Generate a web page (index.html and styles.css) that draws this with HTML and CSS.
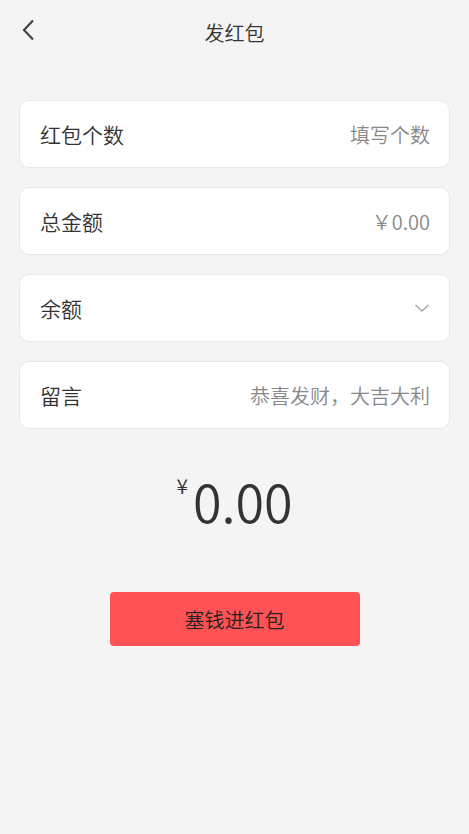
FILE: index.html
```html
<!DOCTYPE html>
<html lang="zh-CN">
<head>
  <meta charset="UTF-8" />
  <meta name="viewport" content="width=device-width, initial-scale=1.0" />
  <title>发红包</title>
  <link rel="stylesheet" href="styles.css">
</head>
<body>
  <div class="header">
    <span class="back">
      <svg width="14" height="22" viewBox="0 0 14 22">
        <path d="M12 1.5 L3 11 L12 20.5" fill="none" stroke="#444" stroke-width="2.2" />
      </svg>
    </span>
    <h1 class="title">发红包</h1>
  </div>

  <div class="form">
    <div class="field">
      <span class="label">红包个数</span>
      <span class="hint">填写个数</span>
    </div>
    <div class="field">
      <span class="label">总金额</span>
      <span class="hint">￥0.00</span>
    </div>
    <div class="field">
      <span class="label">余额</span>
      <svg class="arrow" width="16" height="10" viewBox="0 0 16 10">
        <path d="M1.5 2 L8 8 L14.5 2" fill="none" stroke="#aaa" stroke-width="1.6" />
      </svg>
    </div>
    <div class="field">
      <span class="label">留言</span>
      <span class="hint">恭喜发财，大吉大利</span>
    </div>
  </div>

  <div class="total">
    <span class="yen">¥</span><span class="num">0.00</span>
  </div>

  <div class="actions">
    <button class="submit">塞钱进红包</button>
  </div>
</body>
</html>
```

FILE: styles.css
```css
body {
  margin: 0;
  padding: 0 19px;
  background: #f4f4f4;
  font-family: "Noto Sans CJK SC", "Noto Sans", sans-serif;
  font-weight: 350;
  color: #333;
}
.header {
  position: relative;
  height: 64px;
  display: flex;
  align-items: center;
  justify-content: center;
}
.back {
  position: absolute;
  left: 2px;
  top: 19px;
  line-height: 0;
}
.title {
  margin: 0;
  font-size: 20px;
  font-weight: 350;
  color: #333;
}
.form {
  margin-top: 36px;
}
.field {
  box-sizing: border-box;
  height: 68px;
  margin-bottom: 19px;
  padding: 0 19px 0 20px;
  background: #fff;
  border: 1px solid #e8e8e8;
  border-radius: 10px;
  display: flex;
  align-items: center;
  justify-content: space-between;
}
.label {
  font-size: 21px;
  color: #333;
}
.hint {
  font-size: 20px;
  color: #888;
}
.total {
  margin-top: 37px;
  text-align: center;
  color: #333;
}
.yen {
  font-size: 21px;
  vertical-align: top;
  position: relative;
  top: 4px;
  margin-right: 5px;
}
.num {
  font-size: 52px;
  line-height: 70px;
}
.actions {
  margin-top: 56px;
  text-align: center;
}
.submit {
  width: 250px;
  height: 54px;
  border: none;
  border-radius: 4px;
  background: #fe5254;
  color: #222;
  font-family: inherit;
  font-weight: 350;
  font-size: 20px;
}
```
